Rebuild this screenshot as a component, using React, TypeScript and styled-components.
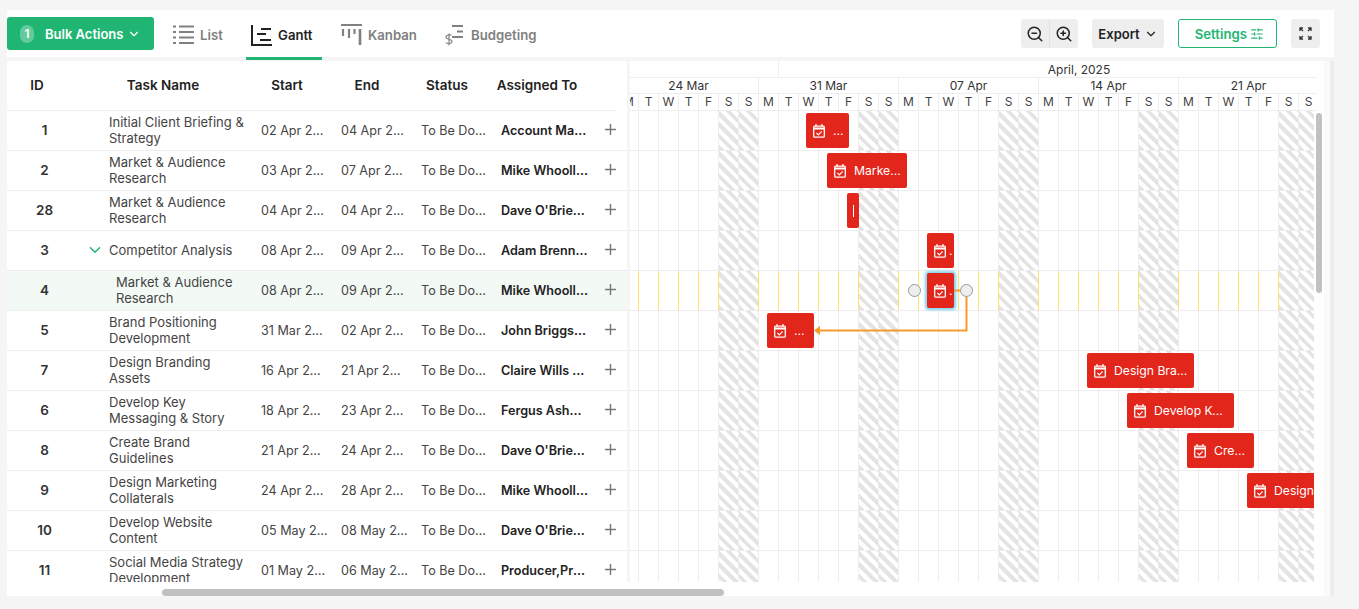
import React from 'react';
import styled, { createGlobalStyle } from 'styled-components';
import { ChevronDown, Plus, SlidersHorizontal, ZoomIn, ZoomOut } from 'lucide-react';

const Global = createGlobalStyle`
  html, body { margin: 0; padding: 0; background: #f5f5f5; }
  body { font-family: Inter, "Liberation Sans", sans-serif; color: #222; overflow: hidden; }
  * { box-sizing: border-box; }
`;

const GREEN = '#21b573';

const Page = styled.div`
  width: 1359px; height: 609px; padding: 10px 25px 13px 7px; background: #f5f5f5;
`;
const Panel = styled.div`
  position: relative; height: 586px; display: flex; flex-direction: column; gap: 4px;
`;
const Toolbar = styled.div`
  height: 47px; background: #fff; display: flex; align-items: flex-start; position: relative;
`;
const BulkButton = styled.button`
  width: 147px; height: 33px; margin-top: 7px; border: 0; border-radius: 3px; background: ${GREEN}; color: #fff;
  display: flex; align-items: center; padding: 0 0 0 13px; font: 600 13px Inter, sans-serif; flex: none;
`;
const Count = styled.span`
  width: 14px; height: 18px; border-radius: 7px; background: #62cb9c; display: flex; align-items: center;
  justify-content: center; font-size: 12px; font-weight: 600; margin-right: 11px;
`;
const Tabs = styled.div`
  display: flex; height: 50px; margin-left: 7px;
`;
const Tab = styled.div<{ $active?: boolean; $w: number; $pad: number }>`
  width: ${p => p.$w}px; height: 50px; display: flex; align-items: center; gap: 6px; padding: 3px 0 0 ${p => p.$pad}px;
  font-size: 13.2px; font-weight: 600; color: ${p => (p.$active ? '#222' : '#808080')};
  border-bottom: 3px solid ${p => (p.$active ? GREEN : 'transparent')};
`;
const RightTools = styled.div`
  margin-left: auto; margin-right: 14px; margin-top: 9px; display: flex; gap: 14px; align-items: center;
`;
const ZoomGroup = styled.div`
  width: 57px; height: 29px; background: #eee; border-radius: 3px; display: flex;
`;
const ZoomBtn = styled.div`
  flex: 1; display: flex; align-items: center; justify-content: center; color: #222;
  &:first-child { border-right: 1px solid #e2e2e2; }
`;
const ExportBtn = styled.div`
  width: 72px; height: 29px; background: #eee; border-radius: 3px; display: flex; align-items: center; justify-content: center;
  gap: 4px; font-size: 13px; font-weight: 600; color: #222;
`;
const SettingsBtn = styled.div`
  width: 99px; height: 29px; border: 1px solid ${GREEN}; border-radius: 3px; display: flex; align-items: center; justify-content: flex-end;
  padding-right: 12px; gap: 3px; font-size: 13.2px; font-weight: 600; color: ${GREEN};
`;
const FullBtn = styled.div`
  width: 29px; height: 29px; background: #eee; border-radius: 3px; display: flex; align-items: center; justify-content: center; color: #333;
`;

const Gantt = styled.div`
  flex: 1; display: flex; background: #fff; min-height: 0; align-items: flex-start;
`;
const LeftPane = styled.div`
  width: 620px; flex: none; display: flex; flex-direction: column; overflow: hidden; background: #fff;
`;
const PaneDivider = styled.div`
  width: 3px; height: 521px; flex: none; background: #f5f5f5;
`;
const HeadRow = styled.div`
  height: 50px; flex: none; width: 610px; display: grid; grid-template-columns: 73px 166px 80px 80px 80px 100px 31px;
  border-bottom: 1px solid #eee; align-items: center; padding-bottom: 1px;
`;
const HeadCell = styled.div<{ $pad?: number; $padR?: number }>`
  text-align: center; font-size: 13.5px; font-weight: 600; color: #222;
  padding-left: ${p => p.$pad ?? 0}px; padding-right: ${p => p.$padR ?? 0}px; white-space: nowrap;
`;
const Body = styled.div`
  height: 471px; overflow: hidden; flex: none;
`;
const Row = styled.div<{ $active?: boolean }>`
  height: 40px; display: grid; grid-template-columns: 75px 164px 80px 80px 80px 100px 41px; align-items: center;
  border-bottom: 1px solid #eee; background: ${p => (p.$active ? '#f3f9f5' : '#fff')}; font-size: 13px; padding-bottom: 2px;
`;
const IdCell = styled.div`
  text-align: center; font-size: 13.5px; font-weight: 600; color: #333;
`;
const NameCell = styled.div<{ $indent?: boolean }>`
  padding-left: ${p => (p.$indent ? 34 : 27)}px; line-height: 16px; color: #444; position: relative; font-size: 13px;
`;
const Caret = styled.span`
  position: absolute; left: 4px; top: 0; height: 16px; display: flex; align-items: center; color: ${GREEN};
`;
const TextCell = styled.div`
  padding: 0 0 0 15px; margin: 2px -2px 0 0; color: #444; font-size: 12.6px; white-space: nowrap; overflow: hidden; text-overflow: ellipsis;
`;
const AssignCell = styled.div`
  padding: 0 0 0 15px; margin: 2px -2px 0 0; color: #222; font-size: 12.6px; font-weight: 600; white-space: nowrap; overflow: hidden; text-overflow: ellipsis;
`;
const AddCell = styled.div`
  display: flex; justify-content: center; padding-left: 7px; color: #777; margin-top: -1px;
`;

const RightPane = styled.div`
  flex: 1; min-width: 0; height: 100%; display: flex; background: #fff;
`;
const Timeline = styled.div`
  width: 687px; flex: none; overflow: hidden; display: flex; flex-direction: column;
`;
const MonthRow = styled.div`
  height: 17px; display: flex; border-bottom: 1px solid #eee; font-size: 12px; line-height: 17px; color: #333;
`;
const MonthCell = styled.div<{ $w: number }>`
  width: ${p => p.$w}px; flex: none; text-align: center; border-right: 1px solid #eee;
`;
const Track = styled.div`
  display: flex; margin-left: -11px; flex: none; width: 700px;
`;
const WeekRow = styled(Track)`
  height: 16px; border-bottom: 1px solid #eee; font-size: 12px; line-height: 15px; color: #333;
`;
const WeekCell = styled.div`
  width: 140px; flex: none; text-align: center; border-right: 1px solid #eee;
`;
const DayRow = styled(Track)`
  height: 17px; border-bottom: 1px solid #eee; font-size: 12px; line-height: 16px; color: #444;
`;
const DayCell = styled.div`
  width: 20px; flex: none; text-align: center; border-right: 1px solid #eee;
`;
const ChartBody = styled.div`
  position: relative; width: 684px; height: 471px; overflow: hidden; flex: none;
`;
const ChartRow = styled(Track)`
  height: 40px; border-bottom: 1px solid #eee;
`;
const ChartCell = styled.div<{ $weekend: boolean; $line: string }>`
  width: 20px; flex: none; border-right: 1px solid ${p => p.$line};
  background: ${p => (p.$weekend ? 'repeating-linear-gradient(45deg, #e4e4e4 0, #e4e4e4 4px, #fff 4px, #fff 8px)' : '#fff')};
`;
const Bar = styled.div<{ $x: number; $y: number; $w: number; $selected?: boolean; $tight?: boolean }>`
  position: absolute; left: ${p => p.$x}px; top: ${p => p.$y}px; width: ${p => p.$w}px; height: 35px;
  background: #e3261b; border-radius: 2px; color: #fff; display: flex; align-items: center; overflow: hidden;
  padding: 0 ${p => (p.$tight ? 2 : 6)}px 0 7px; gap: ${p => (p.$tight ? 3 : 8)}px; font-size: 12.2px;
  box-shadow: ${p => (p.$selected ? '0 0 3px 2px #7fd0ea' : 'none')};
  svg { flex: none; }
`;
const SliverBar = styled(Bar)`
  justify-content: center; padding: 0;
`;
const Sliver = styled.span`
  width: 1px; height: 12px; background: #fff;
`;
const BarText = styled.span`
  flex: 1; min-width: 0; white-space: nowrap; overflow: hidden; text-overflow: ellipsis;
`;
const Dots = styled.span`
  flex: 1; min-width: 0; white-space: nowrap; overflow: hidden;
`;
const Connector = styled.svg`
  position: absolute; left: 0; top: 0; width: 684px; height: 471px; pointer-events: none;
`;
const Gutter = styled.div`
  flex: 1; background: #fff; display: flex; justify-content: flex-end;
`;
const GutterInner = styled.div`
  width: 10px; height: 100%; background: linear-gradient(to right, #fafafa 6px, #ececec 6px);
`;
const VThumb = styled.div`
  position: absolute; left: 1309px; top: 103px; width: 6px; height: 180px; border-radius: 3px; background: #c1c1c1;
`;
const HThumb = styled.div`
  position: absolute; left: 155px; top: 579px; width: 562px; height: 7px; border-radius: 4px; background: #c1c1c1;
`;

const ListIcon = () => (
  <svg width="21" height="20" viewBox="0 0 21 20" fill="none" stroke="#808080" strokeWidth="2.2">
    <path d="M0 1.500h3M6 1.500h15M0 7h3M6 7h15M0 12.500h3M6 12.500h15M0 18h3M6 18h15" />
  </svg>
);
const GanttIcon = () => (
  <svg width="21" height="21" viewBox="0 0 21 21" fill="none" stroke="#222" strokeWidth="2">
    <path d="M1 0v20h20M10 4h10M6 9h9M9 15h11" />
  </svg>
);
const KanbanIcon = () => (
  <svg width="21" height="22" viewBox="0 0 21 22" fill="none" stroke="#808080">
    <path d="M0 1h21" strokeWidth="2" />
    <path d="M2 5v7M8 5v9M13.500 5v5" strokeWidth="2.200" />
    <path d="M19 5v16" strokeWidth="2.600" />
  </svg>
);
const BudgetIcon = () => (
  <svg width="20" height="22" viewBox="0 0 20 22" fill="none" stroke="#808080">
    <path d="M7 2h11M12 7.500h6M7 13h11" strokeWidth="2.200" />
    <path d="M6.500 11.500c-.7-.9-5.500-1-5.500 1.500 0 3 6 1.500 6 4.500 0 2.500-5 2.400-6.300 1M4 9.500v12" strokeWidth="1.100" />
  </svg>
);
const FullIcon = () => (
  <svg width="13" height="13" viewBox="0 0 13 13" fill="none" stroke="#333" strokeWidth="1.300">
    <path d="M1 4V1h3M1 1l3 3M9 1h3v3M12 1 9 4M1 9v3h3M1 12l3-3M12 9v3H9M12 12 9 9" />
  </svg>
);
const CalendarIcon = () => (
  <svg width="12" height="14" viewBox="0 0 12 14" fill="none" stroke="#fff">
    <rect x=".7" y="2.200" width="10.600" height="11" rx="1" strokeWidth="1.300" />
    <path d="M1 4.500h10" strokeWidth="1.800" />
    <path d="M3 0v2.500M9 0v2.500" strokeWidth="1.200" />
    <path d="M3.500 9l1.800 1.800L8.700 7.400" strokeWidth="1.200" />
  </svg>
);

type Task = { id: number; name: string; start: string; end: string; who: string; caret?: boolean; indent?: boolean; active?: boolean };
const tasks: Task[] = [
  { id: 1, name: 'Initial Client Briefing & Strategy', start: '02 Apr 2025', end: '04 Apr 2025', who: 'Account Manager' },
  { id: 2, name: 'Market & Audience Research', start: '03 Apr 2025', end: '07 Apr 2025', who: 'Mike Whoolley' },
  { id: 28, name: 'Market & Audience Research', start: '04 Apr 2025', end: '04 Apr 2025', who: "Dave O'Brien, Producer" },
  { id: 3, name: 'Competitor Analysis', start: '08 Apr 2025', end: '09 Apr 2025', who: 'Adam Brennan', caret: true },
  { id: 4, name: 'Market & Audience Research', start: '08 Apr 2025', end: '09 Apr 2025', who: 'Mike Whoolley', indent: true, active: true },
  { id: 5, name: 'Brand Positioning Development', start: '31 Mar 2025', end: '02 Apr 2025', who: 'John Briggs Smith' },
  { id: 7, name: 'Design Branding Assets', start: '16 Apr 2025', end: '21 Apr 2025', who: 'Claire Wills Smith' },
  { id: 6, name: 'Develop Key Messaging & Story', start: '18 Apr 2025', end: '23 Apr 2025', who: 'Fergus Ashworth' },
  { id: 8, name: 'Create Brand Guidelines', start: '21 Apr 2025', end: '24 Apr 2025', who: "Dave O'Brien, Producer" },
  { id: 9, name: 'Design Marketing Collaterals', start: '24 Apr 2025', end: '28 Apr 2025', who: 'Mike Whoolley' },
  { id: 10, name: 'Develop Website Content', start: '05 May 2025', end: '08 May 2025', who: "Dave O'Brien, Producer" },
  { id: 11, name: 'Social Media Strategy Development', start: '01 May 2025', end: '06 May 2025', who: 'Producer,Project Lead' },
];

type BarItem = { x: number; y: number; w: number; label: string; kind?: 'tight' | 'sliver' | 'dots'; selected?: boolean };
const bars: BarItem[] = [
  { x: 176, y: 2, w: 43, label: '...', kind: 'dots' },
  { x: 197, y: 42, w: 80, label: 'Market & Audience' },
  { x: 217, y: 82, w: 12, label: '', kind: 'sliver' },
  { x: 297, y: 122, w: 27, label: '...', kind: 'tight' },
  { x: 297, y: 162, w: 27, label: '...', kind: 'tight', selected: true },
  { x: 137, y: 202, w: 47, label: '...', kind: 'dots' },
  { x: 457, y: 242, w: 107, label: 'Design Branding Assets' },
  { x: 497, y: 282, w: 107, label: 'Develop Key Messaging' },
  { x: 557, y: 322, w: 67, label: 'Create Brand' },
  { x: 617, y: 362, w: 107, label: 'Design Marketing' },
];

const weeks = ['24 Mar', '31 Mar', '07 Apr', '14 Apr', '21 Apr'];
const dayNames = ['M', 'T', 'W', 'T', 'F', 'S', 'S'];
const days = Array.from({ length: 35 }, (_, i) => dayNames[i % 7]);

function renderBar(b: BarItem) {
  const key = b.x + '-' + b.y;
  if (b.kind === 'sliver') {
    return <SliverBar key={key} $x={b.x} $y={b.y} $w={b.w}><Sliver /></SliverBar>;
  }
  return (
    <Bar key={key} $x={b.x} $y={b.y} $w={b.w} $tight={b.kind === 'tight'} $selected={b.selected}>
      <CalendarIcon />
      {b.kind ? <Dots>{b.label}</Dots> : <BarText>{b.label}</BarText>}
    </Bar>
  );
}

export default function App() {
  return (
    <Page>
      <Global />
      <Panel>
        <Toolbar>
          <BulkButton>
            <Count>1</Count>
            Bulk Actions
            <ChevronDown size={14} style={{ marginLeft: 4 }} />
          </BulkButton>
          <Tabs>
            <Tab $w={85} $pad={12}><ListIcon />List</Tab>
            <Tab $active $w={76} $pad={5}><GanttIcon />Gantt</Tab>
            <Tab $w={104} $pad={19}><KanbanIcon />Kanban</Tab>
            <Tab $w={120} $pad={19}><BudgetIcon />Budgeting</Tab>
          </Tabs>
          <RightTools>
            <ZoomGroup>
              <ZoomBtn><ZoomOut size={18} /></ZoomBtn>
              <ZoomBtn><ZoomIn size={18} /></ZoomBtn>
            </ZoomGroup>
            <ExportBtn>Export<ChevronDown size={14} /></ExportBtn>
            <SettingsBtn>Settings<SlidersHorizontal size={14} /></SettingsBtn>
            <FullBtn><FullIcon /></FullBtn>
          </RightTools>
        </Toolbar>
        <Gantt>
          <LeftPane>
            <HeadRow>
              <HeadCell $padR={13}>ID</HeadCell>
              <HeadCell>Task Name</HeadCell>
              <HeadCell $pad={2}>Start</HeadCell>
              <HeadCell $pad={2}>End</HeadCell>
              <HeadCell $pad={2}>Status</HeadCell>
              <HeadCell $pad={2}>Assigned To</HeadCell>
              <div />
            </HeadRow>
            <Body>
              {tasks.map(t => (
                <Row key={t.id} $active={t.active}>
                  <IdCell>{t.id}</IdCell>
                  <NameCell $indent={t.indent}>
                    {t.caret && <Caret><ChevronDown size={18} /></Caret>}
                    {t.name}
                  </NameCell>
                  <TextCell>{t.start}</TextCell>
                  <TextCell>{t.end}</TextCell>
                  <TextCell>To Be Done</TextCell>
                  <AssignCell>{t.who}</AssignCell>
                  <AddCell><Plus size={17} /></AddCell>
                </Row>
              ))}
            </Body>
          </LeftPane>
          <PaneDivider />
          <RightPane>
            <Timeline>
              <MonthRow>
                <MonthCell $w={149} />
                <MonthCell $w={601}>April, 2025</MonthCell>
              </MonthRow>
              <WeekRow>{weeks.map(w => <WeekCell key={w}>{w}</WeekCell>)}</WeekRow>
              <DayRow>{days.map((d, i) => <DayCell key={i}>{d}</DayCell>)}</DayRow>
              <ChartBody>
                {tasks.map(t => (
                  <ChartRow key={t.id}>
                    {days.map((_, i) => (
                      <ChartCell
                        key={i}
                        $weekend={i % 7 >= 5}
                        $line={t.active && i % 7 !== 5 ? '#fde36b' : '#eee'}
                      />
                    ))}
                  </ChartRow>
                ))}
                {bars.map(renderBar)}
                <Connector viewBox="0 0 684 471">
                  <path d="M324 179.500h6M336.500 186v33.500H190" fill="none" stroke="#f79a2e" strokeWidth="2" />
                  <path d="M184 219.500l6-4.500v9z" fill="#f79a2e" />
                  <circle cx="284.500" cy="179.500" r="6" fill="#eee" stroke="#999" />
                  <circle cx="336.500" cy="179.500" r="6" fill="#eee" stroke="#999" />
                </Connector>
              </ChartBody>
            </Timeline>
            <Gutter><GutterInner /></Gutter>
          </RightPane>
        </Gantt>
        <VThumb />
        <HThumb />
      </Panel>
    </Page>
  );
}
